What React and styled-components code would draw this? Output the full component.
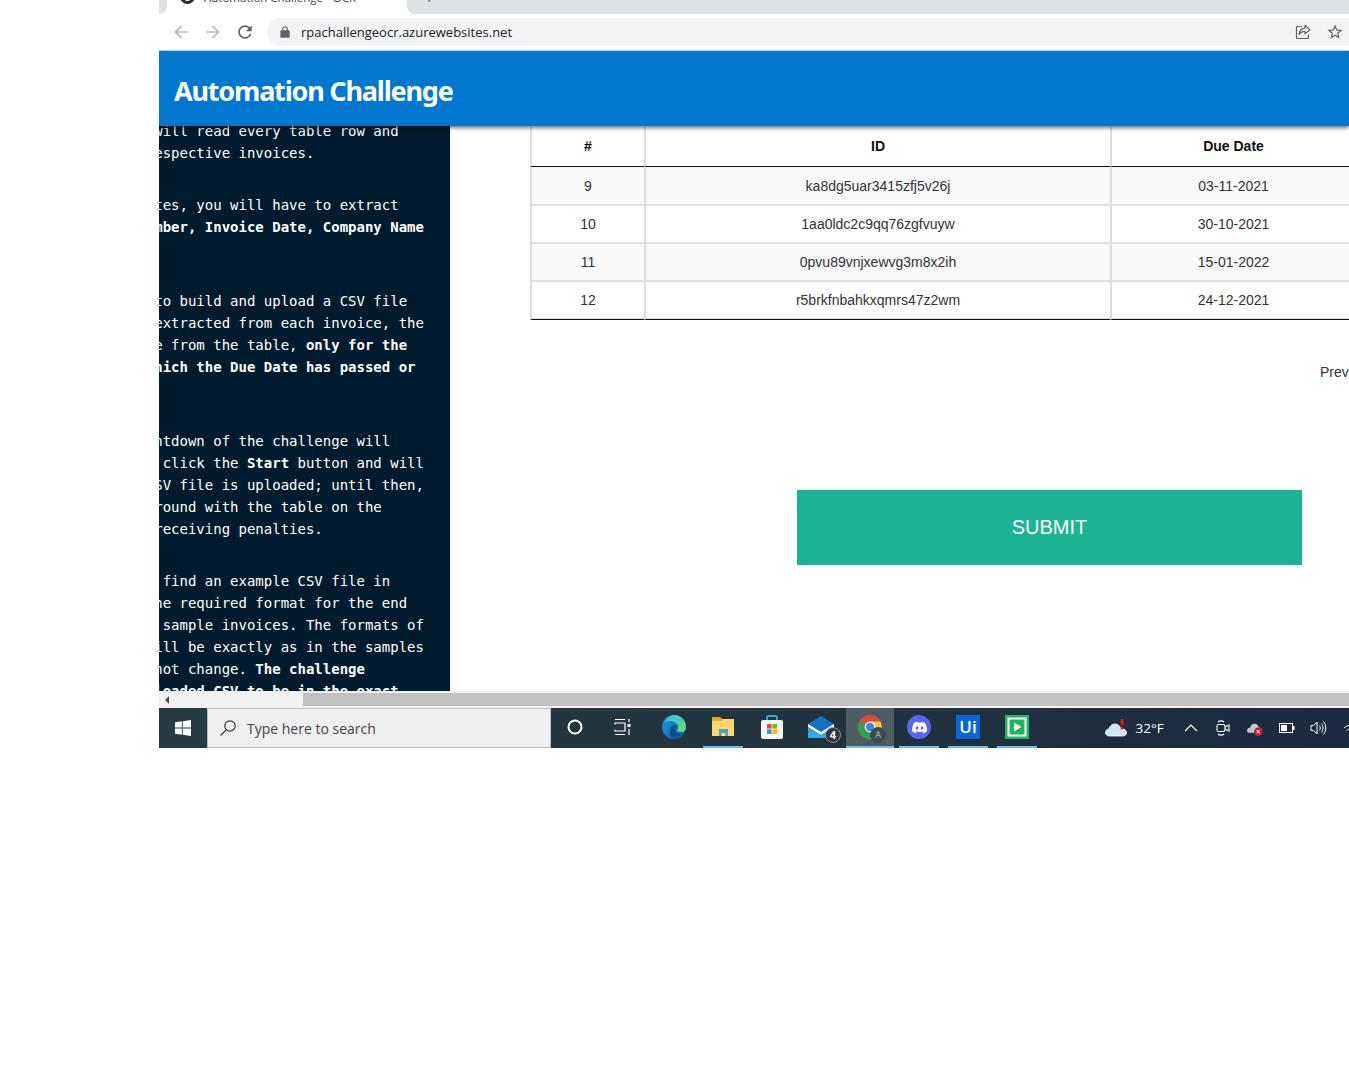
import React from 'react';
import styled, { createGlobalStyle } from 'styled-components';
import { SiDiscord } from 'react-icons/si';

const GlobalStyle = createGlobalStyle`
  html, body {
    margin: 0;
    padding: 0;
    background: #fff;
  }
`;

const Screen = styled.div`
  width: 1190px;
  height: 748px;
  margin-left: 159px;
  overflow: hidden;
  display: flex;
  flex-direction: column;
  font-family: 'Liberation Sans', Arial, sans-serif;
`;

/* browser chrome */
const TabStrip = styled.div`
  height: 14px;
  flex: none;
  background: #fff;
  display: flex;
  overflow: hidden;
`;
const TabGap = styled.div`
  width: ${p => (p.$left ? '8px' : 'auto')};
  flex: ${p => (p.$left ? 'none' : 1)};
  background: #dee1e6;
  border-radius: ${p => (p.$left ? '0 0 8px 0' : '0 0 0 8px')};
  overflow: hidden;
  display: flex;
  min-width: 0;
`;
const ActiveTab = styled.div`
  width: 240px;
  height: 14px;
  flex: none;
  display: flex;
  align-items: flex-start;
  overflow: hidden;
`;
const Favicon = styled.div`
  width: 15px;
  height: 15px;
  margin: -11px 0 0 13px;
  flex: none;
  border-radius: 50%;
  background: #fff;
  border: 3px solid #2b2b2b;
  box-sizing: border-box;
`;
const TabTitle = styled.span`
  font: 11.5px/14px 'Open Sans', sans-serif;
  color: #444;
  margin: -9px 0 0 9px;
  white-space: nowrap;
  flex: 1;
`;
const TabClose = styled.span`
  font: 14px/14px 'Open Sans', sans-serif;
  color: #555;
  margin: -10px 10px 0 0;
`;
const NewTab = styled.span`
  font: 18px/14px 'Open Sans', sans-serif;
  color: #555;
  margin: -10px 0 0 17px;
`;

const Toolbar = styled.div`
  height: 37px;
  flex: none;
  box-sizing: border-box;
  background: #fff;
  border-bottom: 1px solid #d6d7d9;
  display: flex;
  align-items: center;
  padding-left: 6px;
`;
const NavButton = styled.div`
  width: 32px;
  height: 28px;
  display: flex;
  align-items: center;
  justify-content: center;
  svg {
    width: 20px;
    height: 20px;
    fill: ${p => p.$color};
  }
`;
const Omnibox = styled.div`
  flex: 1;
  margin: 0 -2px 0 6px;
  height: 28px;
  background: #f1f3f4;
  border-radius: 14px 0 0 14px;
  display: flex;
  align-items: center;
  padding-left: 11px;
  svg {
    flex: none;
  }
`;
const Url = styled.span`
  font: 13px 'Open Sans', sans-serif;
  color: #202124;
  margin-left: 9px;
  flex: 1;
`;
const OmniIcon = styled.div`
  width: 32px;
  display: flex;
  justify-content: center;
  svg {
    width: 18px;
    height: 18px;
    fill: #5f6368;
  }
`;

/* page */
const Header = styled.header`
  height: 75px;
  flex: none;
  background: #0078d0;
  box-shadow: 0 2px 4px rgba(0, 0, 0, 0.55);
  position: relative;
  z-index: 1;
  display: flex;
  align-items: center;
  padding: 3px 0 0 15px;
  box-sizing: border-box;
`;
const Title = styled.h1`
  margin: 0;
  font: 700 27px 'Noto Sans', sans-serif;
  letter-spacing: -1.2px;
  color: #fff;
`;
const Body = styled.div`
  height: 565px;
  flex: none;
  display: flex;
  overflow: hidden;
`;
const Sidebar = styled.aside`
  width: 291px;
  flex: none;
  background: #011b2e;
  overflow: hidden;
`;
const SidebarText = styled.div`
  margin: -6px 0 0 -4.8px;
  font: 14px/22px 'DejaVu Sans Mono', monospace;
  color: #fff;
`;
const Para = styled.p`
  margin: ${p => p.$gap || 0}px 0 0;
  white-space: pre;
  b {
    font-weight: 700;
  }
`;
const Main = styled.main`
  flex: 1;
  min-width: 0;
  overflow: hidden;
  padding: 1px 0 0 80px;
`;
const Table = styled.table`
  width: 825px;
  table-layout: fixed;
  border-collapse: separate;
  border-spacing: 0;
  font-size: 14px;
  color: #333;
  text-align: center;
`;
const Th = styled.th`
  height: 40px;
  padding: 0 0 2px;
  box-sizing: border-box;
  width: ${p => p.$w}px;
  color: #111;
  font-weight: 700;
  border-left: 2px solid #ddd;
  border-bottom: 1px solid #111;
`;
const Row = styled.tr`
  background: ${p => (p.$odd ? '#f9f9f9' : '#fff')};
  td {
    height: ${p => (p.$first ? 39 : 38)}px;
    padding: 0 0 ${p => (p.$last ? 1 : 0)}px;
    box-sizing: border-box;
    border-left: 2px solid #ddd;
    border-bottom: ${p => (p.$last ? '1px solid #111' : '2px solid #ddd')};
    box-shadow: ${p => (p.$last ? 'inset 0 -1px 0 #ddd' : 'none')};
  }
`;
const Pager = styled.div`
  margin: 36px 0 0 790px;
  font-size: 14px;
  line-height: 32px;
  color: #333;
  white-space: nowrap;
`;
const Submit = styled.button`
  display: block;
  width: 505px;
  height: 75px;
  margin: 102px 0 0 267px;
  border: none;
  background: #1ab394;
  color: #fff;
  font: 20px 'Liberation Sans', Arial, sans-serif;
`;

const Scrollbar = styled.div`
  height: 17px;
  flex: none;
  background: #f1f1f1;
  display: flex;
  align-items: center;
  box-sizing: border-box;
  border-top: 2px solid #f1f1f1;
  border-bottom: 2px solid #f1f1f1;
`;
const ScrollArrow = styled.div`
  width: 0;
  height: 0;
  margin-left: 6px;
  border-style: solid;
  border-width: 4px 4px 4px 0;
  border-color: transparent #505050 transparent transparent;
`;
const ScrollThumb = styled.div`
  margin-left: 134px;
  flex: 1;
  height: 13px;
  background: #c1c1c1;
`;

/* windows taskbar */
const Taskbar = styled.div`
  height: 40px;
  flex: none;
  display: flex;
  background: linear-gradient(90deg, #253a43 0%, #22343f 50%, #1b2a40 100%);
  overflow: hidden;
`;
const Start = styled.div`
  width: 48px;
  flex: none;
  display: flex;
  align-items: center;
  justify-content: center;
`;
const SearchBox = styled.div`
  width: 344px;
  flex: none;
  box-sizing: border-box;
  background: #f0f0f0;
  border: 1px solid #b8bcbe;
  display: flex;
  align-items: center;
  padding-left: 11px;
  font: 14px 'Open Sans', sans-serif;
  color: #444;
  gap: 10px;
`;
const Slot = styled.div`
  width: ${p => p.$w || 49}px;
  margin-right: ${p => p.$after || 0}px;
  flex: none;
  display: flex;
  justify-content: center;
`;
const Tile = styled.div`
  width: ${p => (p.$active ? 48 : 40)}px;
  height: 40px;
  box-sizing: border-box;
  border-bottom: 2px solid ${p => (p.$open ? '#76b9ed' : 'transparent')};
  background: ${p => (p.$active ? '#4c5c62' : 'transparent')};
  display: flex;
  align-items: center;
  justify-content: center;
  position: relative;
`;
const Badge = styled.span`
  position: absolute;
  right: ${p => p.$right}px;
  bottom: 3px;
  width: 16px;
  height: 16px;
  border-radius: 50%;
  background: ${p => p.$bg};
  border: 1px solid ${p => p.$line};
  box-sizing: border-box;
  color: ${p => p.$ink};
  font: ${p => p.$weight} ${p => p.$size}px/14px 'Open Sans', sans-serif;
  text-align: center;
`;
const DiscordDisc = styled.div`
  width: 24px;
  height: 24px;
  border-radius: 50%;
  background: #5865f2;
  color: #fff;
  display: flex;
  align-items: center;
  justify-content: center;
`;
const UiLogo = styled.div`
  width: 24px;
  height: 24px;
  background: #0a66d8;
  color: #fff;
  font: 600 17px/24px 'Open Sans', sans-serif;
  text-align: center;
`;
const Tray = styled.div`
  flex: none;
  margin-left: 60px;
  display: flex;
  align-items: center;
`;
const Weather = styled.div`
  width: 73px;
  padding-left: 3px;
  box-sizing: border-box;
  flex: none;
  display: flex;
  align-items: center;
  gap: 9px;
  font: 13.5px 'Open Sans', sans-serif;
  color: #fff;
`;
const TrayIcon = styled.div`
  width: 32px;
  height: 40px;
  flex: none;
  display: flex;
  align-items: center;
  justify-content: center;
`;

const BACK = 'M20 11H7.83l5.59-5.59L12 4l-8 8 8 8 1.41-1.41L7.83 13H20v-2z';
const FORWARD = 'M12 4l-1.41 1.41L16.17 11H4v2h12.17l-5.58 5.59L12 20l8-8z';
const RELOAD = 'M17.65 6.35C16.2 4.9 14.21 4 12 4c-4.42 0-7.99 3.58-7.99 8s3.57 8 7.99 8c3.73 0 6.84-2.55 7.73-6h-2.08c-.82 2.33-3.04 4-5.65 4-3.31 0-6-2.69-6-6s2.69-6 6-6c1.66 0 3.14.69 4.22 1.78L13 11h7V4l-2.35 2.35z';
const STAR = 'M22 9.24l-7.19-.62L12 2 9.19 8.63 2 9.24l5.46 4.73L5.82 21 12 17.27 18.18 21l-1.63-7.03L22 9.24zM12 15.4l-3.76 2.27 1-4.28-3.32-2.88 4.38-.38L12 6.1l1.71 4.04 4.38.38-3.32 2.88 1 4.28L12 15.4z';

const Nav = ({ d, color }) => (
  <NavButton $color={color}>
    <svg viewBox="0 0 24 24"><path d={d} /></svg>
  </NavButton>
);

const Lock = () => (
  <svg width="14" height="14" viewBox="0 0 24 24" fill="#5f6368">
    <path d="M18 9h-1V7c0-2.76-2.24-5-5-5S7 4.24 7 7v2H6c-1.1 0-2 .9-2 2v9c0 1.1.9 2 2 2h12c1.1 0 2-.9 2-2v-9c0-1.1-.9-2-2-2zM9 7c0-1.66 1.34-3 3-3s3 1.34 3 3v2H9V7z" />
  </svg>
);

const ShareIcon = () => (
  <svg viewBox="0 0 18 18" style={{ fill: 'none' }}>
    <path d="M8 3.5H3.5a1 1 0 0 0-1 1v10a1 1 0 0 0 1 1h10a1 1 0 0 0 1-1v-3" stroke="#5f6368" strokeWidth="1.2" fill="none" />
    <path d="M11 2.5l5 4.2-5 4.2V8.3c-3 0-4.6 1-5.8 3.2.3-3.8 2.3-6 5.8-6.3V2.5z" stroke="#5f6368" strokeWidth="1.2" fill="none" strokeLinejoin="round" />
  </svg>
);

const WindowsLogo = () => (
  <svg width="16" height="16" viewBox="0 0 16 16" fill="#fff">
    <path d="M0 2.3l6.9-1v6.3H0zM7.7 1.2L16 0v7.6H7.7zM0 8.4h6.9v6.3l-6.9-1zM7.7 8.4H16V16l-8.3-1.2z" />
  </svg>
);

const SearchIcon = () => (
  <svg width="18" height="18" viewBox="0 0 18 18" fill="none" stroke="#333" strokeWidth="1.2">
    <circle cx="11" cy="7" r="5.2" />
    <path d="M7.2 10.8L1.5 16.5" />
  </svg>
);

const TaskView = () => (
  <svg width="18" height="18" viewBox="0 0 18 18" fill="none" stroke="#fff" strokeWidth="1.2">
    <path d="M1 1.5h10M1 16.5h10M1 6.5V5h10v8H1v-1.5" />
    <rect x="13.5" y="6" width="3" height="3" fill="#fff" stroke="none" />
    <path d="M15 1v3M15 11v6" />
  </svg>
);

const EdgeIcon = () => (
  <svg width="24" height="24" viewBox="0 0 24 24">
    <defs>
      <linearGradient id="edgeA" x1="0" y1="0" x2="1" y2="1">
        <stop offset="0" stopColor="#1b9de2" />
        <stop offset="1" stopColor="#0c59a4" />
      </linearGradient>
      <linearGradient id="edgeB" x1="0" y1="0" x2="1" y2="1">
        <stop offset="0" stopColor="#35c1f1" />
        <stop offset="1" stopColor="#6fdc5c" />
      </linearGradient>
    </defs>
    <circle cx="12" cy="12" r="12" fill="url(#edgeA)" />
    <path d="M3 7C5 2 9 0 12 0c7 0 12 5 12 12 0 3-2 5-5 5-3 0-4-1-4-2 1-1 2-2 1-4-1-3-4-5-7-5-3 0-5 0-6 1z" fill="url(#edgeB)" />
    <path d="M8 15c0-3 2-5 5-5 1 0 2 .3 3 1-1 1-3 1-3 4 0 3 4 4 7 3-2 3-5 5-8 5-2 0-4-1-4-3z" fill="#0b4f8f" />
  </svg>
);

const FolderIcon = () => (
  <svg width="24" height="22" viewBox="0 0 24 22">
    <path d="M1 1h8l2 2h-10z" fill="#d9a322" />
    <rect x="1" y="3" width="22" height="17" fill="#ffd764" />
    <rect x="1" y="3" width="10" height="2" fill="#e5ab2b" />
    <path d="M8 13h9v7h-2.5v-3h-4v3H8z" fill="#4a9fd9" />
  </svg>
);

const StoreIcon = () => (
  <svg width="24" height="26" viewBox="0 0 24 26">
    <path d="M7 7V3.5a1.5 1.5 0 0 1 1.5-1.5h7A1.5 1.5 0 0 1 17 3.5V7" fill="none" stroke="#39a5e0" strokeWidth="2" />
    <rect x="1" y="6" width="22" height="19" rx="2" fill="#f7f7f7" />
    <rect x="7" y="10" width="4.6" height="4.6" fill="#e94f2c" />
    <rect x="12.4" y="10" width="4.6" height="4.6" fill="#7fba00" />
    <rect x="7" y="15.4" width="4.6" height="4.6" fill="#1e9be8" />
    <rect x="12.4" y="15.4" width="4.6" height="4.6" fill="#ffb900" />
  </svg>
);

const MailIcon = () => (
  <svg width="26" height="22" viewBox="0 0 26 22">
    <path d="M13 0l13 8v14H0V8z" fill="#1273c4" />
    <path d="M0 8l13 8 13-8v3L13 19 0 11z" fill="#fff" />
    <path d="M0 11l13 8 13-8v11H0z" fill="#32a7ea" />
  </svg>
);

const ChromeIcon = () => (
  <svg width="24" height="24" viewBox="0 0 24 24">
    <circle cx="12" cy="12" r="12" fill="#de4a3a" />
    <path d="M12 12L1.6 6A12 12 0 0 0 12 24l5-9z" fill="#2f9f4a" />
    <path d="M12 6.5h10.4A12 12 0 0 1 12 24l5-9z" fill="#fbc934" />
    <circle cx="12" cy="12" r="5.4" fill="#fff" />
    <circle cx="12" cy="12" r="4.2" fill="#3f83ea" />
  </svg>
);

const PlayerIcon = () => (
  <svg width="24" height="24" viewBox="0 0 24 24">
    <rect x="0" y="0" width="24" height="24" fill="#22b45e" />
    <rect x="2.5" y="2.5" width="19" height="19" fill="#fff" />
    <rect x="4.5" y="4.5" width="15" height="15" fill="#22b45e" />
    <path d="M9 7.5l7.5 4.5L9 16.5z" fill="#fff" />
  </svg>
);

const CloudIcon = () => (
  <svg width="22" height="18" viewBox="0 0 22 18">
    <path d="M4 17c-2 0-3.500-1.500-3.500-3.500S2 10 4 10c.5-3 3-5 6-5 2.500 0 5 1.500 5.500 4.500 3 0 6 1.500 6 4S19.500 17 18 17z" fill="#cfe6f7" stroke="#fff" strokeWidth="0.800" />
    <rect x="15.500" y="0" width="3" height="6.500" rx="1" fill="#e8112d" />
    <circle cx="17" cy="9" r="1.500" fill="#e8112d" />
  </svg>
);

const Chevron = () => (
  <svg width="14" height="8" viewBox="0 0 14 8" fill="none" stroke="#fff" strokeWidth="1.200">
    <path d="M1 7l6-6 6 6" />
  </svg>
);

const MeetIcon = () => (
  <svg width="14" height="18" viewBox="0 0 14 18" fill="none" stroke="#fff" strokeWidth="1.100">
    <rect x="1" y="5.500" width="8" height="7" rx="1.500" />
    <path d="M9 8l4-2v6l-4-2" />
    <path d="M2 3c1.500-1.500 4.500-1.500 6 0M2 15c1.500 1.500 4.500 1.500 6 0" />
  </svg>
);

const OneDriveIcon = () => (
  <svg width="17" height="15" viewBox="0 0 16 14">
    <path d="M1 9c0-2 1.500-3 3-3 .5-2 2-3.500 4-3.500S11.500 4 12 6c1 0 3 .5 3 2.500S13 11 12 11H3c-1 0-2-1-2-2z" fill="#c5c8cb" />
    <circle cx="11.500" cy="10" r="4" fill="#d4122a" />
    <path d="M10 8.500l3 3M13 8.500l-3 3" stroke="#fff" strokeWidth="1" />
  </svg>
);

const BatteryIcon = () => (
  <svg width="16" height="10" viewBox="0 0 16 10">
    <rect x="0.500" y="0.500" width="13" height="9" fill="none" stroke="#fff" />
    <rect x="2" y="2" width="6" height="6" fill="#fff" />
    <rect x="14" y="3" width="1.500" height="4" fill="#fff" />
  </svg>
);

const VolumeIcon = () => (
  <svg width="17" height="16" viewBox="0 0 17 16" fill="none" stroke="#fff" strokeWidth="1">
    <path d="M1 5.500h2.500L7 2v12l-3.500-3.500H1z" />
    <path d="M9.500 5.500c1 1.500 1 3.500 0 5M11.500 3.500c2 2.500 2 6.500 0 9M13.500 1.500c3 3.500 3 9.500 0 13" />
  </svg>
);

const WifiIcon = () => (
  <svg width="16" height="14" viewBox="0 0 16 14" fill="none" stroke="#fff" strokeWidth="1">
    <path d="M1 7c4-4 10-4 14 0M3.500 9.500c2.500-2.500 6.500-2.500 9 0" />
  </svg>
);

const rows = [
  ['9', 'ka8dg5uar3415zfj5v26j', '03-11-2021'],
  ['10', '1aa0ldc2c9qq76zgfvuyw', '30-10-2021'],
  ['11', '0pvu89vnjxewvg3m8x2ih', '15-01-2022'],
  ['12', 'r5brkfnbahkxqmrs47z2wm', '24-12-2021'],
];

const App = () => (
  <>
    <GlobalStyle />
    <Screen>
      <TabStrip>
        <TabGap $left />
        <ActiveTab>
          <Favicon />
          <TabTitle>Automation Challenge - OCR</TabTitle>
          <TabClose>×</TabClose>
        </ActiveTab>
        <TabGap><NewTab>+</NewTab></TabGap>
      </TabStrip>
      <Toolbar>
        <Nav d={BACK} color="#b9bbbe" />
        <Nav d={FORWARD} color="#b9bbbe" />
        <Nav d={RELOAD} color="#5f6368" />
        <Omnibox>
          <Lock />
          <Url>rpachallengeocr.azurewebsites.net</Url>
          <OmniIcon><ShareIcon /></OmniIcon>
          <OmniIcon><svg viewBox="0 0 24 24"><path d={STAR} /></svg></OmniIcon>
        </Omnibox>
      </Toolbar>
      <Header>
        <Title>Automation Challenge</Title>
      </Header>
      <Body>
        <Sidebar>
          <SidebarText>
            <Para>{'will read every table row and\nespective invoices.'}</Para>
            <Para $gap={30}>{'tes, you will have to extract\n'}<b>mber, Invoice Date, Company Name</b></Para>
            <Para $gap={52}>{'to build and upload a CSV file\nextracted from each invoice, the\ne from the table, '}<b>{'only for the\nhich the Due Date has passed or'}</b></Para>
            <Para $gap={52}>{'ntdown of the challenge will\n click the '}<b>Start</b>{' button and will\nSV file is uploaded; until then,\nround with the table on the\nreceiving penalties.'}</Para>
            <Para $gap={30}>{' find an example CSV file in\nhe required format for the end\n sample invoices. The formats of\nill be exactly as in the samples\nnot change. '}<b>{'The challenge\nloaded CSV to be in the exact'}</b></Para>
          </SidebarText>
        </Sidebar>
        <Main>
          <Table>
            <thead>
              <tr>
                <Th $w={114}>#</Th>
                <Th $w={466}>ID</Th>
                <Th>Due Date</Th>
              </tr>
            </thead>
            <tbody>
              {rows.map((r, i) => (
                <Row key={r[0]} $odd={i % 2 === 0} $first={i === 0} $last={i === rows.length - 1}>
                  <td>{r[0]}</td>
                  <td>{r[1]}</td>
                  <td>{r[2]}</td>
                </Row>
              ))}
            </tbody>
          </Table>
          <Pager>Prev</Pager>
          <Submit>SUBMIT</Submit>
        </Main>
      </Body>
      <Scrollbar>
        <ScrollArrow />
        <ScrollThumb />
      </Scrollbar>
      <Taskbar>
        <Start><WindowsLogo /></Start>
        <SearchBox><SearchIcon />Type here to search</SearchBox>
        <Slot $w={48}><Tile>
          <svg width="18" height="18" viewBox="0 0 18 18" fill="none" stroke="#fff" strokeWidth="2"><circle cx="9" cy="9" r="6.500" /></svg>
        </Tile></Slot>
        <Slot $w={48} $after={2.5}><Tile><TaskView /></Tile></Slot>
        <Slot><Tile><EdgeIcon /></Tile></Slot>
        <Slot><Tile $open><FolderIcon /></Tile></Slot>
        <Slot><Tile><StoreIcon /></Tile></Slot>
        <Slot><Tile><MailIcon /><Badge $right={0} $bg="#2b3a42" $line="#8a9499" $ink="#fff" $size={11} $weight={700}>4</Badge></Tile></Slot>
        <Slot><Tile $open $active><ChromeIcon /><Badge $right={8} $bg="#3a4a50" $line="#3a4a50" $ink="#c4c9cb" $size={9} $weight={400}>A</Badge></Tile></Slot>
        <Slot><Tile $open><DiscordDisc><SiDiscord size={15} /></DiscordDisc></Tile></Slot>
        <Slot><Tile $open><UiLogo>Ui</UiLogo></Tile></Slot>
        <Slot><Tile $open><PlayerIcon /></Tile></Slot>
        <Tray>
          <Weather><CloudIcon />32°F</Weather>
          <TrayIcon><Chevron /></TrayIcon>
          <TrayIcon><MeetIcon /></TrayIcon>
          <TrayIcon><OneDriveIcon /></TrayIcon>
          <TrayIcon><BatteryIcon /></TrayIcon>
          <TrayIcon><VolumeIcon /></TrayIcon>
          <TrayIcon><WifiIcon /></TrayIcon>
        </Tray>
      </Taskbar>
    </Screen>
  </>
);

export default App;
